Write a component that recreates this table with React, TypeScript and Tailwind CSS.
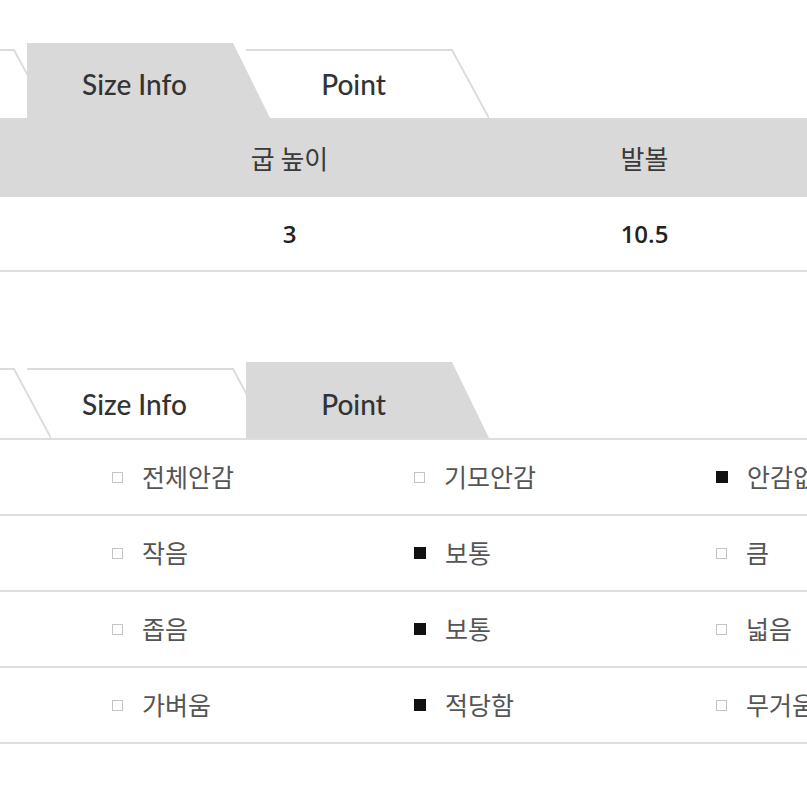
import React from "react";

const KR = "font-['Noto_Sans_CJK_KR','Noto_Sans',sans-serif]";

type TabProps = { label: string; active: boolean; z: string; first?: boolean; h: number };

const Tab = ({ label, active, z, first, h }: TabProps) => {
  return (
    <div
      className={`relative w-[243px] shrink-0 mr-[-24px] ${z} ${first ? "ml-[-192px]" : ""}`}
      style={{ height: h }}
    >
      <svg className="absolute inset-0" width="243" height={h} viewBox={`0 0 243 ${h}`}>
        {active ? (
          <polygon points={`0,0 206,0 243,${h} 0,${h}`} fill="#d9d9d9" />
        ) : (
          <>
            <polygon points={`0,7 206,7 243,${h} 0,${h}`} fill="#ffffff" />
            <polyline points={`0,7 206,7 243,${h}`} fill="none" stroke="#dcdcdc" strokeWidth="2" />
          </>
        )}
      </svg>
      <div className="relative flex h-full w-[215px] items-center justify-center pt-[7px] font-['Lato',sans-serif] text-[28px] font-medium text-[#333]">
        {label}
      </div>
    </div>
  );
};

const TabStrip = ({ active, h }: { active: number; h: number }) => {
  const labels = ["Detail", "Size Info", "Point"];
  const zs = ["z-[3]", "z-[2]", "z-[1]"];
  return (
    <div className="flex overflow-hidden" style={{ height: h }}>
      {labels.map((l, i) => (
        <Tab key={l} label={i === 0 ? "" : l} active={i === active} z={i === active ? "z-[10]" : zs[i]} first={i === 0} h={h} />
      ))}
    </div>
  );
};

const Box = ({ on }: { on: boolean }) =>
  on ? (
    <span className="inline-block h-[12px] w-[12px] shrink-0 bg-[#111]" />
  ) : (
    <span className="inline-block h-[11px] w-[11px] shrink-0 border border-[#c4c4c4] bg-white" />
  );

const rows: [string, boolean][][] = [
  [["전체안감", false], ["기모안감", false], ["안감없음", true]],
  [["작음", false], ["보통", true], ["큼", false]],
  [["좁음", false], ["보통", true], ["넓음", false]],
  [["가벼움", false], ["적당함", true], ["무거움", false]],
];

export default function App() {
  return (
    <div className="relative h-[807px] w-[807px] overflow-hidden bg-white pt-[43px]">
      <TabStrip active={1} h={75} />
      <div className={`flex h-[79px] items-center bg-[#d9d9d9] ${KR} text-[26px] text-[#3a3a3a]`}>
        <div className="w-[112px] shrink-0" />
        <div className="w-[355px] shrink-0 text-center">굽 높이</div>
        <div className="w-[355px] shrink-0 text-center">발볼</div>
      </div>
      <div className="flex h-[75px] items-center border-b-2 border-[#dedede] font-['Open_Sans',sans-serif] text-[24px] font-semibold text-[#222]">
        <div className="w-[112px] shrink-0" />
        <div className="w-[355px] shrink-0 text-center">3</div>
        <div className="w-[355px] shrink-0 text-center">10.5</div>
      </div>

      <div className="mt-[90px]">
        <TabStrip active={2} h={76} />
        <div className="border-t-2 border-[#dedede]">
          {rows.map((r, i) => (
            <div key={i} className={`flex h-[76px] items-center border-b-2 border-[#dedede] pl-[112px] ${KR} text-[25px] text-[#555]`}>
              {r.map(([t, on], j) => (
                <div key={j} className="flex w-[302px] shrink-0 items-center gap-[19px] whitespace-nowrap">
                  <Box on={on} />
                  <span>{t}</span>
                </div>
              ))}
            </div>
          ))}
        </div>
      </div>
    </div>
  );
}
